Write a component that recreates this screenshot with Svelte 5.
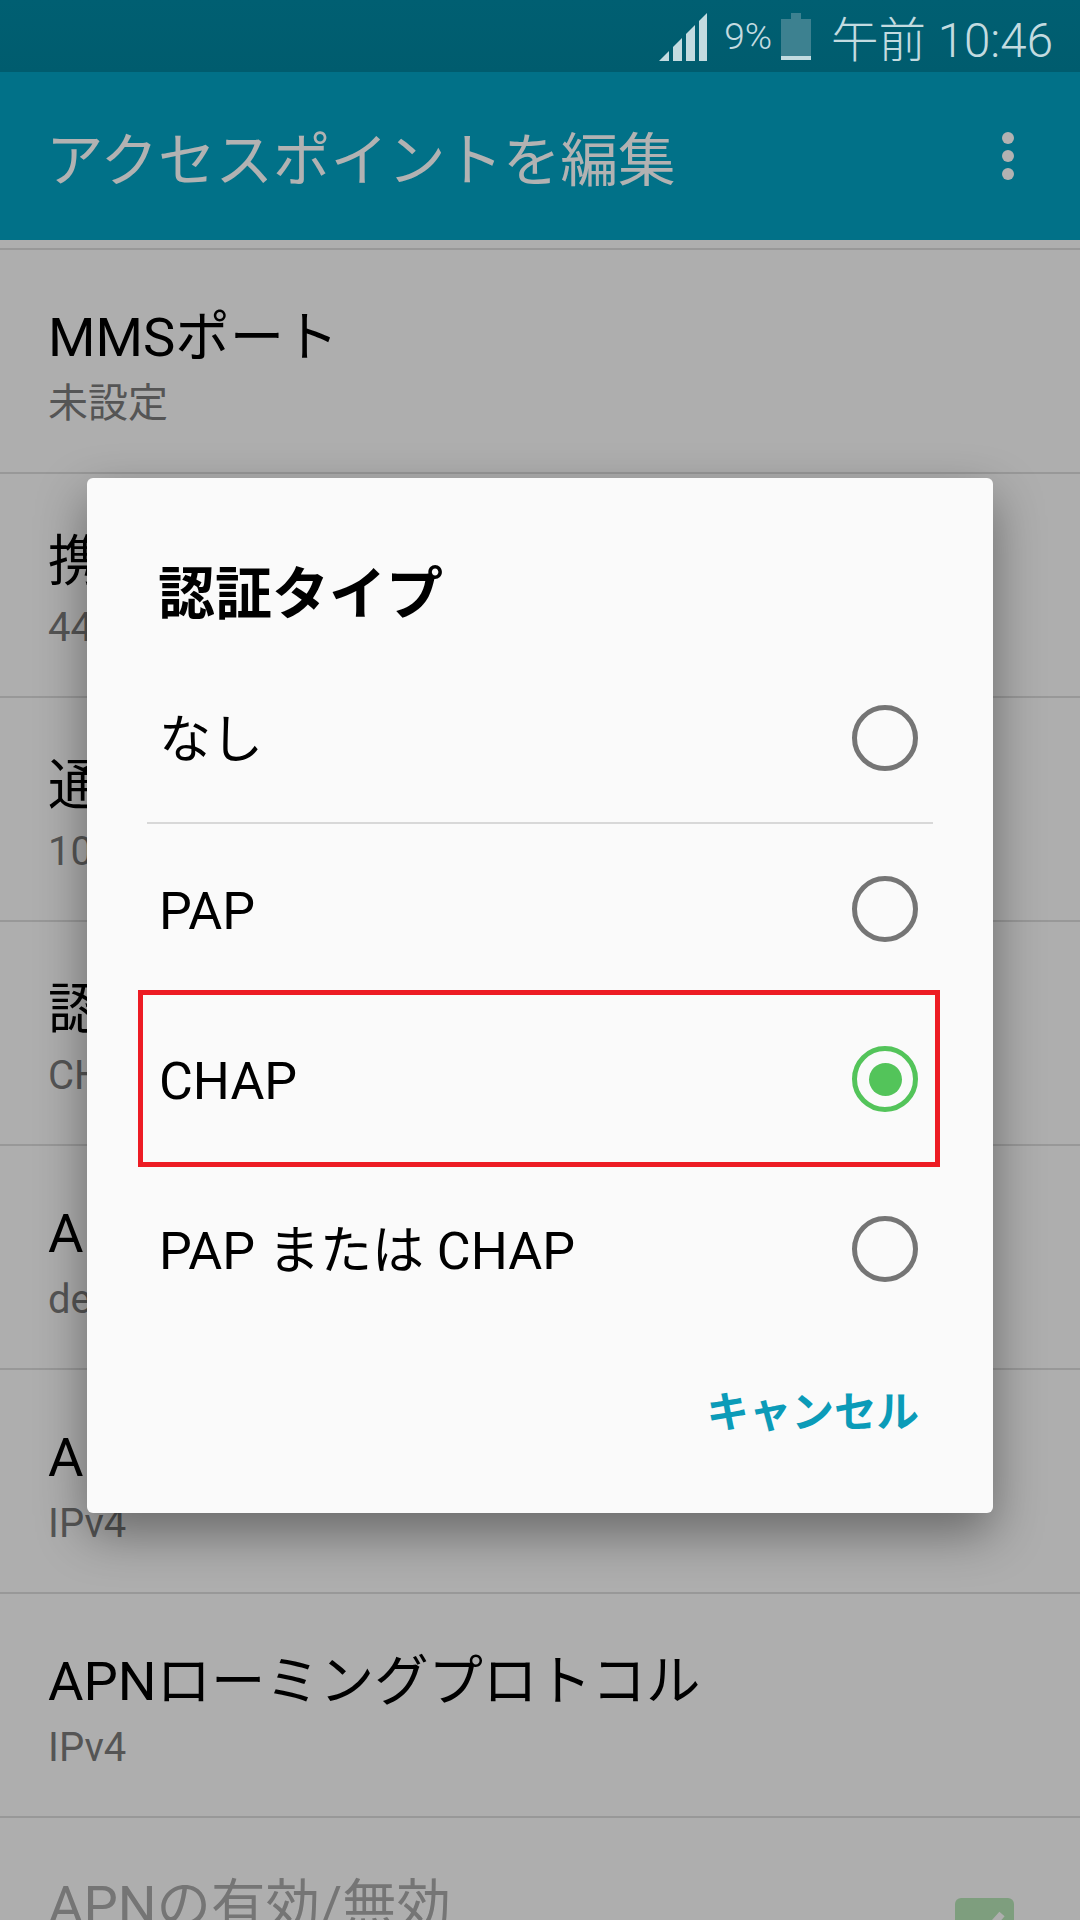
<script>
  const rows = [
    { title: 'MMSポート', value: '未設定' },
    { title: '携帯国コード', value: '440' },
    { title: '通信事業者コード', value: '10' },
    { title: '認証タイプ', value: 'CHAP' },
    { title: 'APNタイプ', value: 'default,supl' },
    { title: 'APNプロトコル', value: 'IPv4' },
    { title: 'APNローミングプロトコル', value: 'IPv4' }
  ];

  const options = [
    { label: 'なし' },
    { label: 'PAP' },
    { label: 'CHAP', selected: true },
    { label: 'PAP または CHAP' }
  ];
</script>

<div class="phone">
  <div class="status">
    <svg class="signal" width="48" height="48" viewBox="0 0 48 48">
      <polygon points="0,48 10,38 10,48" />
      <polygon points="14,48 14,34 23,25 23,48" />
      <polygon points="27,48 27,21 36,12 36,48" />
      <polygon points="40,48 40,8 48,0 48,48" />
    </svg>
    <span class="pct">9%</span>
    <div class="battery"><div class="cap"></div><div class="cell"></div></div>
    <span class="clock">午前 10:46</span>
  </div>

  <header class="appbar">
    <h1>アクセスポイントを編集</h1>
    <div class="more"><i></i><i></i><i></i></div>
  </header>

  <div class="list">
    {#each rows as row}
      <div class="row">
        <div class="row-title">{row.title}</div>
        <div class="row-value">{row.value}</div>
      </div>
    {/each}
    <div class="row disabled">
      <div class="row-title">APNの有効/無効</div>
      <div class="check">
        <svg width="59" height="59" viewBox="0 0 59 59"><path d="M12 30l12 12 23-26" /></svg>
      </div>
    </div>
  </div>

  <div class="scrim">
    <div class="dialog">
      <h2>認証タイプ</h2>
      <div class="options">
        {#each options as opt, i}
          <div class="option" class:divided={i === 0} class:marked={opt.selected}>
            <span>{opt.label}</span>
            <div class="radio" class:on={opt.selected}></div>
          </div>
        {/each}
      </div>
      <div class="actions"><span>キャンセル</span></div>
    </div>
  </div>
</div>

<style>
  :global(body) {
    margin: 0;
    background: #fafafa;
  }

  .phone {
    position: relative;
    width: 1080px;
    height: 1920px;
    overflow: hidden;
    background: #fafafa;
    color: #000;
    font-family: Roboto, "Noto Sans CJK JP", sans-serif;
  }

  .status {
    position: relative;
    z-index: 2;
    height: 72px;
    box-sizing: border-box;
    padding-right: 27px;
    display: flex;
    justify-content: flex-end;
    align-items: center;
    background: linear-gradient(#005f72, #005c6e);
    color: #c3dbe0;
  }

  .signal {
    fill: #c3dbe0;
    margin-right: 17px;
    margin-top: 2px;
  }

  .pct {
    font-size: 37px;
    font-weight: 300;
    margin-right: 9px;
  }

  .battery {
    width: 30px;
    height: 47px;
    margin-right: 20px;
    display: flex;
    flex-direction: column;
    align-items: center;
  }

  .cap {
    width: 10px;
    height: 6px;
    background: #3d8190;
  }

  .cell {
    width: 30px;
    flex: 1;
    box-sizing: border-box;
    background: #3d8190;
    border-bottom: 4px solid #c3dbe0;
  }

  .clock {
    font-size: 47.5px;
    font-weight: 300;
  }

  .appbar {
    height: 168px;
    box-sizing: border-box;
    padding: 0 66px 0 46px;
    display: flex;
    justify-content: space-between;
    align-items: center;
    background: #02a2c3;
    color: #fff;
  }

  h1 {
    margin: 0;
    font-size: 57.5px;
    font-weight: 400;
  }

  .more {
    display: flex;
    flex-direction: column;
    gap: 6px;
  }

  .more i {
    width: 12px;
    height: 12px;
    border-radius: 50%;
    background: #fff;
  }

  .list {
    padding-top: 8px;
  }

  .row {
    position: relative;
    height: 224px;
    box-sizing: border-box;
    border-top: 2px solid #dadada;
    padding: 53px 48px 0;
  }

  .row-title {
    font-size: 54.4px;
    line-height: 70px;
  }

  .row-value {
    font-size: 40px;
    line-height: 62px;
    color: #7a7a7a;
  }

  .disabled .row-title {
    color: #a8a8a8;
  }

  .check {
    position: absolute;
    right: 66px;
    top: 80px;
    width: 59px;
    height: 59px;
    border-radius: 6px;
    background: #b5e3b5;
  }

  .check path {
    fill: none;
    stroke: #fafafa;
    stroke-width: 7;
  }

  .scrim {
    position: absolute;
    inset: 72px 0 0;
    z-index: 1;
    padding-bottom: 1px;
    background: rgba(0, 0, 0, 0.3);
    display: flex;
    justify-content: center;
    align-items: center;
  }

  .dialog {
    width: 906px;
    height: 1035px;
    border-radius: 6px;
    background: #fafafa;
    box-shadow: 0 20px 50px rgba(0, 0, 0, 0.4);
    display: flex;
    flex-direction: column;
  }

  h2 {
    margin: 0;
    height: 176px;
    box-sizing: border-box;
    padding: 77px 0 0 71px;
    font-size: 57px;
    line-height: 80px;
    font-weight: 700;
  }

  .options {
    margin: 0 60px;
  }

  .option {
    position: relative;
    height: 170px;
    box-sizing: border-box;
    padding: 0 15px 0 12px;
    display: flex;
    justify-content: space-between;
    align-items: center;
    font-size: 52px;
  }

  .option span {
    line-height: 60px;
    padding-top: 6px;
  }

  .divided {
    border-bottom: 2px solid #d8d8d8;
  }

  .marked::after {
    content: "";
    position: absolute;
    inset: -4px -7px -3px -9px;
    border: 5px solid #ed1c24;
  }

  .radio {
    width: 66px;
    height: 66px;
    box-sizing: border-box;
    border: 5px solid #757575;
    border-radius: 50%;
    display: flex;
    justify-content: center;
    align-items: center;
  }

  .radio.on {
    border-color: #53c45a;
  }

  .radio.on::before {
    content: "";
    width: 33px;
    height: 33px;
    border-radius: 50%;
    background: #53c45a;
  }

  .actions {
    flex: 1;
    display: flex;
    justify-content: flex-end;
    align-items: center;
    padding: 0 74px 31px 0;
    font-size: 42.5px;
    font-weight: 700;
    color: #0b9bb8;
  }
</style>
